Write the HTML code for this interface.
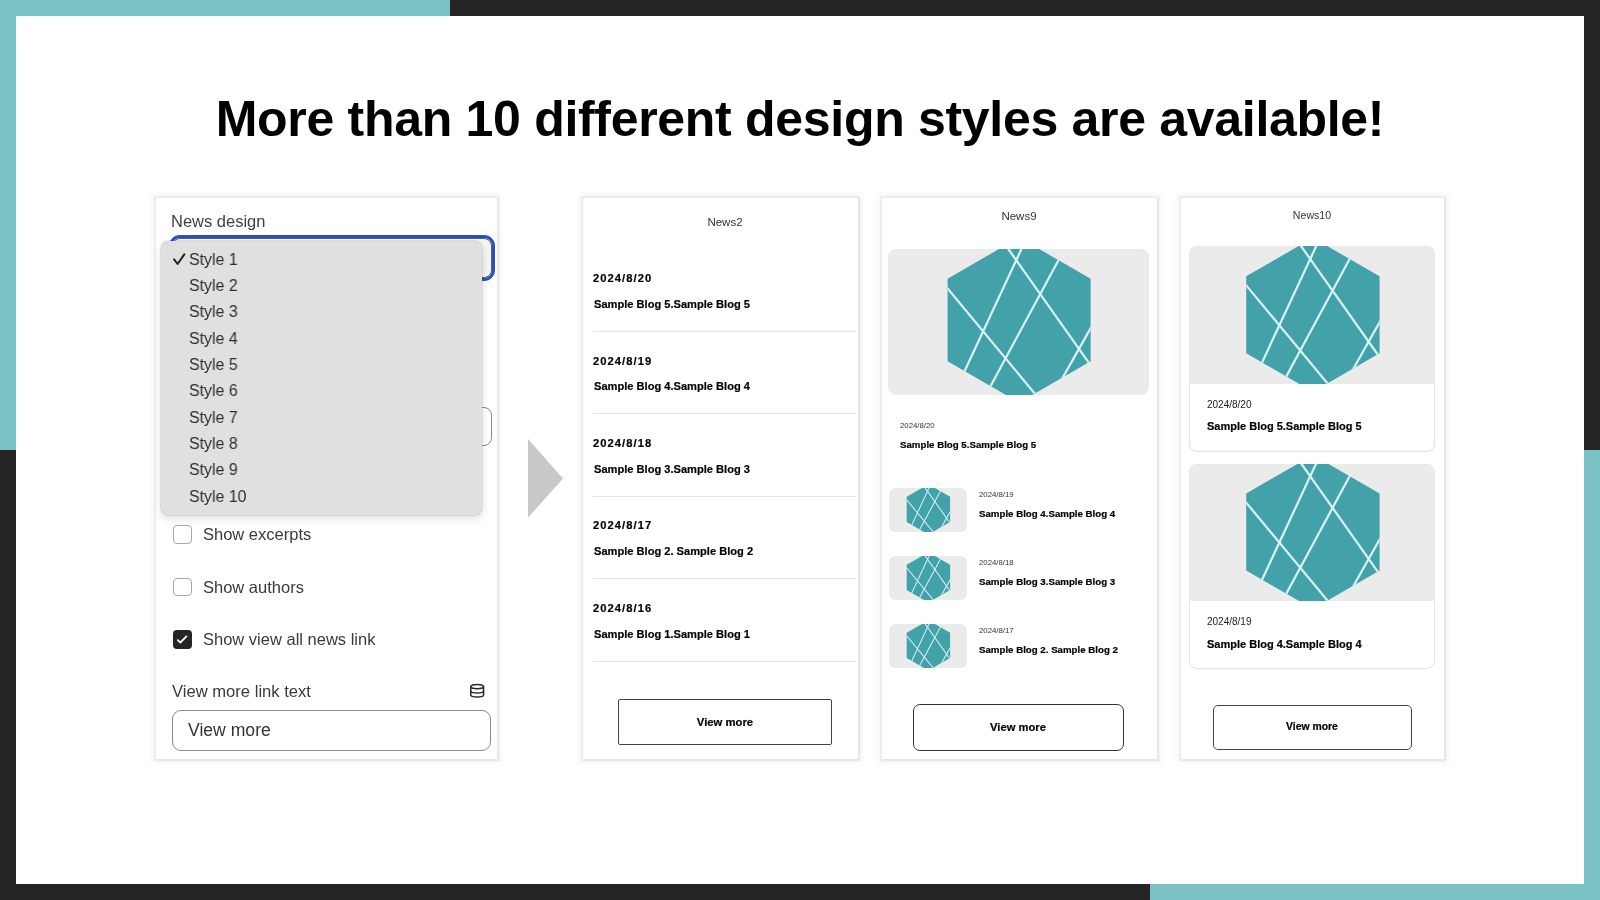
<!DOCTYPE html><html><head><meta charset="utf-8"><style>
html,body{margin:0;padding:0;}
body{width:1600px;height:900px;position:relative;overflow:hidden;background:#252525;font-family:"Liberation Sans", sans-serif;}
.t{position:absolute;white-space:nowrap;will-change:transform;}
.b{position:absolute;box-sizing:border-box;}
</style></head><body>
<svg width="0" height="0" style="position:absolute"><defs><clipPath id="hc"><polygon points="0,-77 66.68,-38.5 66.68,38.5 0,77 -66.68,38.5 -66.68,-38.5"/></clipPath></defs></svg>

<div class="b" style="left:0px;top:0px;width:450px;height:16px;background:#7ac2c5"></div>
<div class="b" style="left:0px;top:0px;width:16px;height:450px;background:#7ac2c5"></div>
<div class="b" style="left:1150px;top:884px;width:450px;height:16px;background:#7ac2c5"></div>
<div class="b" style="left:1584px;top:450px;width:16px;height:450px;background:#7ac2c5"></div>
<div class="b" style="left:16px;top:16px;width:1568px;height:868px;background:#fff"></div>
<div class="t" style="left:100.00px;width:1400px;text-align:center;top:93.66px;font-size:50px;line-height:50px;color:#000;font-weight:bold;letter-spacing:-0.3px;">More than 10 different design styles are available!</div>
<div class="b" style="left:156px;top:198px;width:341px;height:561px;background:#fff;box-shadow:0 0 1.5px 2.5px rgba(0,0,0,0.065),0 0 5px 5px rgba(0,0,0,0.03);"></div>
<div class="t" style="left:171.30px;top:213.03px;font-size:16.5px;line-height:16.5px;color:#3f3f3f;font-weight:normal;">News design</div>
<div class="b" style="left:169.3px;top:234.7px;width:325.4px;height:46.0px;border:3px solid #2550c4;border-radius:11px;"></div>
<div class="b" style="left:172.2px;top:238.4px;width:319.6px;height:39.29999999999998px;border:1.3px solid #5e5e5e;border-radius:8px;background:#f4f4f4"></div>
<div class="b" style="left:172px;top:407px;width:319.5px;height:38.5px;border:1.5px solid #8a8a8a;border-radius:8px;background:#fff"></div>
<div class="b" style="left:173px;top:525px;width:18.5px;height:18.5px;border:1.5px solid #a8a8a8;border-radius:4px;background:#fff"></div>
<div class="t" style="left:203.00px;top:526.03px;font-size:16.5px;line-height:16.5px;color:#3a3a3a;font-weight:normal;">Show excerpts</div>
<div class="b" style="left:173px;top:577.5px;width:18.5px;height:18.5px;border:1.5px solid #a8a8a8;border-radius:4px;background:#fff"></div>
<div class="t" style="left:203.00px;top:578.63px;font-size:16.5px;line-height:16.5px;color:#3a3a3a;font-weight:normal;">Show authors</div>
<div class="b" style="left:173px;top:630px;width:18.5px;height:18.5px;border-radius:4px;background:#262626"></div>
<svg class="b" style="left:173px;top:630px" width="18.5" height="18.5" viewBox="0 0 18.5 18.5"><path d="M4.8 10.2 L7.4 12.5 L13.4 6.4" fill="none" stroke="#fff" stroke-width="1.8" stroke-linecap="round" stroke-linejoin="round"/></svg>
<div class="t" style="left:203.00px;top:631.03px;font-size:16.5px;line-height:16.5px;color:#3a3a3a;font-weight:normal;">Show view all news link</div>
<div class="t" style="left:172.00px;top:683.54px;font-size:16.6px;line-height:16.6px;color:#3a3a3a;font-weight:normal;">View more link text</div>
<svg class="b" style="left:470px;top:683px" width="15" height="16" viewBox="0 0 15 16"><g fill="none" stroke="#262626" stroke-width="1.5"><ellipse cx="7.15" cy="3.55" rx="6.4" ry="2.1"/><path d="M0.75 3.55 V12 C0.75 13.2 3.6 14 7.15 14 C10.7 14 13.55 13.2 13.55 12 V3.55"/><path d="M0.75 8 C0.75 9.2 3.6 10 7.15 10 C10.7 10 13.55 9.2 13.55 8"/></g></svg>
<div class="b" style="left:171.5px;top:710px;width:319.5px;height:41px;border:1.5px solid #8a8a8a;border-radius:9px;background:#fff"></div>
<div class="t" style="left:188.00px;top:721.80px;font-size:17.6px;line-height:17.6px;color:#333;font-weight:normal;">View more</div>
<div class="b" style="left:161px;top:241px;width:321.3px;height:273.70000000000005px;background:#e0e0e0;border-radius:7px;box-shadow:0 0 0 0.5px rgba(0,0,0,0.18),0 4px 10px rgba(0,0,0,0.12)"></div>
<div class="t" style="left:189.10px;top:251.68px;font-size:16.8px;line-height:16.8px;color:#2e2e2e;font-weight:normal;transform:scaleX(0.948);transform-origin:0 0;">Style 1</div>
<div class="t" style="left:189.10px;top:278.01px;font-size:16.8px;line-height:16.8px;color:#2e2e2e;font-weight:normal;transform:scaleX(0.948);transform-origin:0 0;">Style 2</div>
<div class="t" style="left:189.10px;top:304.34px;font-size:16.8px;line-height:16.8px;color:#2e2e2e;font-weight:normal;transform:scaleX(0.948);transform-origin:0 0;">Style 3</div>
<div class="t" style="left:189.10px;top:330.67px;font-size:16.8px;line-height:16.8px;color:#2e2e2e;font-weight:normal;transform:scaleX(0.948);transform-origin:0 0;">Style 4</div>
<div class="t" style="left:189.10px;top:357.00px;font-size:16.8px;line-height:16.8px;color:#2e2e2e;font-weight:normal;transform:scaleX(0.948);transform-origin:0 0;">Style 5</div>
<div class="t" style="left:189.10px;top:383.33px;font-size:16.8px;line-height:16.8px;color:#2e2e2e;font-weight:normal;transform:scaleX(0.948);transform-origin:0 0;">Style 6</div>
<div class="t" style="left:189.10px;top:409.66px;font-size:16.8px;line-height:16.8px;color:#2e2e2e;font-weight:normal;transform:scaleX(0.948);transform-origin:0 0;">Style 7</div>
<div class="t" style="left:189.10px;top:435.99px;font-size:16.8px;line-height:16.8px;color:#2e2e2e;font-weight:normal;transform:scaleX(0.948);transform-origin:0 0;">Style 8</div>
<div class="t" style="left:189.10px;top:462.32px;font-size:16.8px;line-height:16.8px;color:#2e2e2e;font-weight:normal;transform:scaleX(0.948);transform-origin:0 0;">Style 9</div>
<div class="t" style="left:189.10px;top:488.65px;font-size:16.8px;line-height:16.8px;color:#2e2e2e;font-weight:normal;transform:scaleX(0.948);transform-origin:0 0;">Style 10</div>
<svg class="b" style="left:172px;top:252px" width="15" height="14" viewBox="0 0 15 14"><path d="M2.1 7.4 L5.6 12 L12.3 2.4" fill="none" stroke="#222" stroke-width="2" stroke-linecap="round" stroke-linejoin="round"/></svg>
<svg class="b" style="left:528px;top:439px" width="36" height="79" viewBox="0 0 36 79"><polygon points="0,0 35,39.5 0,78.6" fill="#c8c8c8"/></svg>
<div class="b" style="left:583px;top:198px;width:275px;height:561px;background:#fff;box-shadow:0 0 1.5px 2.5px rgba(0,0,0,0.065),0 0 5px 5px rgba(0,0,0,0.03);"></div>
<div class="t" style="left:664.60px;width:120px;text-align:center;top:217.26px;font-size:11.5px;line-height:11.5px;color:#333;font-weight:normal;">News2</div>
<div class="t" style="left:593.20px;top:273.12px;font-size:11.2px;line-height:11.2px;color:#000;font-weight:bold;letter-spacing:1.05px;-webkit-text-stroke:0.2px #000;">2024/8/20</div>
<div class="t" style="left:593.50px;top:298.90px;font-size:11.1px;line-height:11.1px;color:#000;font-weight:bold;-webkit-text-stroke:0.2px #000;">Sample Blog 5.Sample Blog 5</div>
<div class="b" style="left:593px;top:331.0px;width:263px;height:1.0px;background:#e2e2e2"></div>
<div class="t" style="left:593.20px;top:355.57px;font-size:11.2px;line-height:11.2px;color:#000;font-weight:bold;letter-spacing:1.05px;-webkit-text-stroke:0.2px #000;">2024/8/19</div>
<div class="t" style="left:593.50px;top:381.35px;font-size:11.1px;line-height:11.1px;color:#000;font-weight:bold;-webkit-text-stroke:0.2px #000;">Sample Blog 4.Sample Blog 4</div>
<div class="b" style="left:593px;top:413.45px;width:263px;height:1.0px;background:#e2e2e2"></div>
<div class="t" style="left:593.20px;top:438.02px;font-size:11.2px;line-height:11.2px;color:#000;font-weight:bold;letter-spacing:1.05px;-webkit-text-stroke:0.2px #000;">2024/8/18</div>
<div class="t" style="left:593.50px;top:463.80px;font-size:11.1px;line-height:11.1px;color:#000;font-weight:bold;-webkit-text-stroke:0.2px #000;">Sample Blog 3.Sample Blog 3</div>
<div class="b" style="left:593px;top:495.9px;width:263px;height:1.0px;background:#e2e2e2"></div>
<div class="t" style="left:593.20px;top:520.47px;font-size:11.2px;line-height:11.2px;color:#000;font-weight:bold;letter-spacing:1.05px;-webkit-text-stroke:0.2px #000;">2024/8/17</div>
<div class="t" style="left:593.50px;top:546.25px;font-size:11.1px;line-height:11.1px;color:#000;font-weight:bold;-webkit-text-stroke:0.2px #000;">Sample Blog 2. Sample Blog 2</div>
<div class="b" style="left:593px;top:578.35px;width:263px;height:1.0px;background:#e2e2e2"></div>
<div class="t" style="left:593.20px;top:602.92px;font-size:11.2px;line-height:11.2px;color:#000;font-weight:bold;letter-spacing:1.05px;-webkit-text-stroke:0.2px #000;">2024/8/16</div>
<div class="t" style="left:593.50px;top:628.70px;font-size:11.1px;line-height:11.1px;color:#000;font-weight:bold;-webkit-text-stroke:0.2px #000;">Sample Blog 1.Sample Blog 1</div>
<div class="b" style="left:593px;top:660.8px;width:263px;height:1.0px;background:#e2e2e2"></div>
<div class="b" style="left:618px;top:698.5px;width:214px;height:46.5px;border:1px solid #444;border-radius:2px;background:#fff"></div>
<div class="t" style="left:649.50px;width:150px;text-align:center;top:716.73px;font-size:11.3px;line-height:11.3px;color:#000;font-weight:bold;-webkit-text-stroke:0.2px #000;">View more</div>
<div class="b" style="left:882px;top:198px;width:275px;height:561px;background:#fff;box-shadow:0 0 1.5px 2.5px rgba(0,0,0,0.065),0 0 5px 5px rgba(0,0,0,0.03);"></div>
<div class="t" style="left:958.60px;width:120px;text-align:center;top:210.86px;font-size:11.5px;line-height:11.5px;color:#333;font-weight:normal;">News9</div>
<div class="b" style="left:888.4px;top:249px;width:260.19999999999993px;height:146.39999999999998px;background:#ebebeb;border-radius:8px;overflow:hidden"><svg width="260.19999999999993" height="146.39999999999998" style="display:block"><g transform="translate(131.10,71.00) scale(1.0727)"><polygon points="0.00,-77.00 66.68,-38.50 66.68,38.50 0.00,77.00 -66.68,38.50 -66.68,-38.50" fill="#43a1aa"/><g stroke="#d8f4f6" stroke-width="2.051" clip-path="url(#hc)"><line x1="-91" y1="-58.7" x2="39.5" y2="98.6"/><line x1="-26.9" y1="-90" x2="88" y2="72.5"/><line x1="14.0" y1="-91.6" x2="-67.4" y2="83.3"/><line x1="49.4" y1="-79.3" x2="-39.3" y2="85.2"/><line x1="74.4" y1="-6.2" x2="33.2" y2="67"/></g></g></svg></div>
<div class="t" style="left:900.20px;top:422.40px;font-size:7.8px;line-height:7.8px;color:#333;font-weight:normal;">2024/8/20</div>
<div class="t" style="left:900.20px;top:440.19px;font-size:9.7px;line-height:9.7px;color:#000;font-weight:bold;-webkit-text-stroke:0.2px #000;">Sample Blog 5.Sample Blog 5</div>
<div class="b" style="left:888.5px;top:488.3px;width:78.39999999999998px;height:43.80000000000001px;background:#ebebeb;border-radius:6px;overflow:hidden"><svg width="78.39999999999998" height="43.80000000000001" style="display:block"><g transform="translate(39.40,21.40) scale(0.3260)"><polygon points="0.00,-77.00 66.68,-38.50 66.68,38.50 0.00,77.00 -66.68,38.50 -66.68,-38.50" fill="#43a1aa"/><g stroke="#d8f4f6" stroke-width="3.068" clip-path="url(#hc)"><line x1="-91" y1="-58.7" x2="39.5" y2="98.6"/><line x1="-26.9" y1="-90" x2="88" y2="72.5"/><line x1="14.0" y1="-91.6" x2="-67.4" y2="83.3"/><line x1="49.4" y1="-79.3" x2="-39.3" y2="85.2"/><line x1="74.4" y1="-6.2" x2="33.2" y2="67"/></g></g></svg></div>
<div class="t" style="left:978.80px;top:491.20px;font-size:7.8px;line-height:7.8px;color:#333;font-weight:normal;">2024/8/19</div>
<div class="t" style="left:978.80px;top:508.79px;font-size:9.7px;line-height:9.7px;color:#000;font-weight:bold;-webkit-text-stroke:0.2px #000;">Sample Blog 4.Sample Blog 4</div>
<div class="b" style="left:888.5px;top:556.3px;width:78.39999999999998px;height:43.80000000000007px;background:#ebebeb;border-radius:6px;overflow:hidden"><svg width="78.39999999999998" height="43.80000000000007" style="display:block"><g transform="translate(39.40,21.40) scale(0.3260)"><polygon points="0.00,-77.00 66.68,-38.50 66.68,38.50 0.00,77.00 -66.68,38.50 -66.68,-38.50" fill="#43a1aa"/><g stroke="#d8f4f6" stroke-width="3.068" clip-path="url(#hc)"><line x1="-91" y1="-58.7" x2="39.5" y2="98.6"/><line x1="-26.9" y1="-90" x2="88" y2="72.5"/><line x1="14.0" y1="-91.6" x2="-67.4" y2="83.3"/><line x1="49.4" y1="-79.3" x2="-39.3" y2="85.2"/><line x1="74.4" y1="-6.2" x2="33.2" y2="67"/></g></g></svg></div>
<div class="t" style="left:978.80px;top:559.20px;font-size:7.8px;line-height:7.8px;color:#333;font-weight:normal;">2024/8/18</div>
<div class="t" style="left:978.80px;top:576.79px;font-size:9.7px;line-height:9.7px;color:#000;font-weight:bold;-webkit-text-stroke:0.2px #000;">Sample Blog 3.Sample Blog 3</div>
<div class="b" style="left:888.5px;top:624.3px;width:78.39999999999998px;height:43.80000000000007px;background:#ebebeb;border-radius:6px;overflow:hidden"><svg width="78.39999999999998" height="43.80000000000007" style="display:block"><g transform="translate(39.40,21.40) scale(0.3260)"><polygon points="0.00,-77.00 66.68,-38.50 66.68,38.50 0.00,77.00 -66.68,38.50 -66.68,-38.50" fill="#43a1aa"/><g stroke="#d8f4f6" stroke-width="3.068" clip-path="url(#hc)"><line x1="-91" y1="-58.7" x2="39.5" y2="98.6"/><line x1="-26.9" y1="-90" x2="88" y2="72.5"/><line x1="14.0" y1="-91.6" x2="-67.4" y2="83.3"/><line x1="49.4" y1="-79.3" x2="-39.3" y2="85.2"/><line x1="74.4" y1="-6.2" x2="33.2" y2="67"/></g></g></svg></div>
<div class="t" style="left:978.80px;top:627.20px;font-size:7.8px;line-height:7.8px;color:#333;font-weight:normal;">2024/8/17</div>
<div class="t" style="left:978.80px;top:644.79px;font-size:9.7px;line-height:9.7px;color:#000;font-weight:bold;-webkit-text-stroke:0.2px #000;">Sample Blog 2. Sample Blog 2</div>
<div class="b" style="left:913.2px;top:704.3px;width:211.29999999999995px;height:47.200000000000045px;border:1px solid #333;border-radius:7px;background:#fff"></div>
<div class="t" style="left:943.30px;width:150px;text-align:center;top:722.22px;font-size:11.2px;line-height:11.2px;color:#000;font-weight:bold;-webkit-text-stroke:0.2px #000;">View more</div>
<div class="b" style="left:1181px;top:198px;width:263px;height:561px;background:#fff;box-shadow:0 0 1.5px 2.5px rgba(0,0,0,0.065),0 0 5px 5px rgba(0,0,0,0.03);"></div>
<div class="t" style="left:1252.00px;width:120px;text-align:center;top:210.22px;font-size:10.6px;line-height:10.6px;color:#333;font-weight:normal;">News10</div>
<div class="b" style="left:1189.4px;top:246.2px;width:245.19999999999982px;height:205.60000000000002px;border:1px solid #e2e2e2;border-radius:8px;background:#fff"></div>
<div class="b" style="left:1189.4px;top:246.2px;width:245.19999999999982px;height:138.10000000000002px;background:#ebebeb;border-radius:8px 8px 0 0;overflow:hidden"><svg width="245.19999999999982" height="138.10000000000002" style="display:block"><g transform="translate(123.90,68.80) scale(1.0000)"><polygon points="0.00,-77.00 66.68,-38.50 66.68,38.50 0.00,77.00 -66.68,38.50 -66.68,-38.50" fill="#43a1aa"/><g stroke="#d8f4f6" stroke-width="2.200" clip-path="url(#hc)"><line x1="-91" y1="-58.7" x2="39.5" y2="98.6"/><line x1="-26.9" y1="-90" x2="88" y2="72.5"/><line x1="14.0" y1="-91.6" x2="-67.4" y2="83.3"/><line x1="49.4" y1="-79.3" x2="-39.3" y2="85.2"/><line x1="74.4" y1="-6.2" x2="33.2" y2="67"/></g></g></svg></div>
<div class="t" style="left:1207.20px;top:399.73px;font-size:10px;line-height:10px;color:#222;font-weight:normal;">2024/8/20</div>
<div class="t" style="left:1207.20px;top:420.89px;font-size:11px;line-height:11px;color:#000;font-weight:bold;-webkit-text-stroke:0.2px #000;">Sample Blog 5.Sample Blog 5</div>
<div class="b" style="left:1189.4px;top:463.6px;width:245.19999999999982px;height:205.19999999999993px;border:1px solid #e2e2e2;border-radius:8px;background:#fff"></div>
<div class="b" style="left:1189.4px;top:463.6px;width:245.19999999999982px;height:137.39999999999998px;background:#ebebeb;border-radius:8px 8px 0 0;overflow:hidden"><svg width="245.19999999999982" height="137.39999999999998" style="display:block"><g transform="translate(123.90,68.00) scale(1.0000)"><polygon points="0.00,-77.00 66.68,-38.50 66.68,38.50 0.00,77.00 -66.68,38.50 -66.68,-38.50" fill="#43a1aa"/><g stroke="#d8f4f6" stroke-width="2.200" clip-path="url(#hc)"><line x1="-91" y1="-58.7" x2="39.5" y2="98.6"/><line x1="-26.9" y1="-90" x2="88" y2="72.5"/><line x1="14.0" y1="-91.6" x2="-67.4" y2="83.3"/><line x1="49.4" y1="-79.3" x2="-39.3" y2="85.2"/><line x1="74.4" y1="-6.2" x2="33.2" y2="67"/></g></g></svg></div>
<div class="t" style="left:1207.20px;top:616.73px;font-size:10px;line-height:10px;color:#222;font-weight:normal;">2024/8/19</div>
<div class="t" style="left:1207.20px;top:638.69px;font-size:11px;line-height:11px;color:#000;font-weight:bold;-webkit-text-stroke:0.2px #000;">Sample Blog 4.Sample Blog 4</div>
<div class="b" style="left:1213.2px;top:705px;width:198.5999999999999px;height:44.5px;border:1px solid #444;border-radius:5px;background:#fff"></div>
<div class="t" style="left:1236.80px;width:150px;text-align:center;top:722.19px;font-size:10.4px;line-height:10.4px;color:#000;font-weight:bold;-webkit-text-stroke:0.2px #000;">View more</div>
</body></html>
